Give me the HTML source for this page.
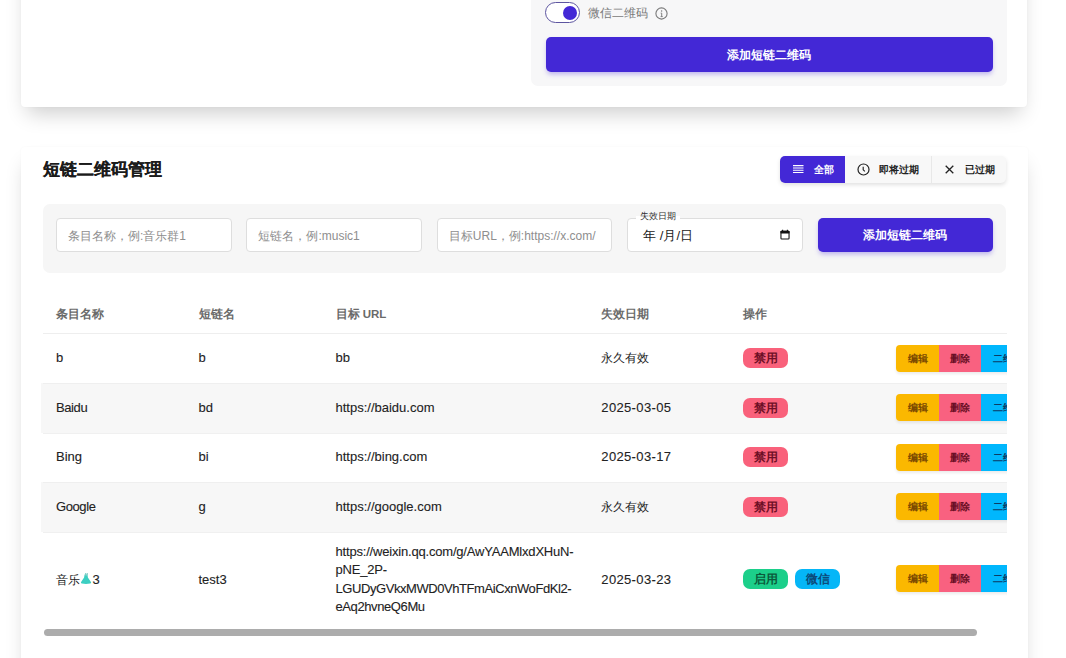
<!DOCTYPE html>
<html><head><meta charset="utf-8">
<style>
*{box-sizing:border-box;margin:0;padding:0}
html,body{width:1066px;height:658px;overflow:hidden;background:#fff;font-family:"Liberation Sans",sans-serif;color:#1f1f1f;position:relative}
.abs{position:absolute}
.card{position:absolute;background:#fff;border-radius:4px;box-shadow:0 12px 20px -6px rgba(0,0,0,.2),0 0 2px rgba(0,0,0,.04)}
.panel{position:absolute;background:#f7f7f8;border-radius:7px}
.btnp{position:absolute;background:#4328d6;border-radius:5px;color:#fff;font-weight:bold;font-size:11.7px;text-align:center;box-shadow:0 3px 5px -1px rgba(67,40,214,.35)}
.inp{position:absolute;top:14px;height:34px;width:175.5px;background:#fff;border:1px solid #dedede;border-radius:4px;font-size:12px;color:#8e8e8e;padding-left:11px;line-height:34px;white-space:nowrap;overflow:hidden}
.th{position:absolute;font-size:11.5px;font-weight:bold;color:#6a6a6a;top:2px;line-height:44px}
.row{position:absolute;left:0;width:1000px}
.row.z{background:#f7f7f7;box-shadow:-2px 0 0 #f7f7f7}
.cell{position:absolute;font-size:13px;color:#222;white-space:nowrap;line-height:18.5px;-webkit-text-stroke:0.1px #222}
.dis{background:#f9617b;color:#6e0f26}
.en{background:#1ccf8a;color:#0b5a3a}
.wx{background:#05b6f7;color:#0c4a7a}
.badge{position:absolute;height:20px;border-radius:7px;font-size:11.8px;font-weight:bold;text-align:center;line-height:20px;width:45px}
.acts{position:absolute;left:853px;height:27px;width:130px;border-radius:4px;overflow:hidden;box-shadow:0 2px 3px rgba(0,0,0,.08)}
.acts span{position:absolute;top:0;height:27px;line-height:27px;font-size:10.4px;font-weight:bold;text-align:center}
.seg{position:absolute;top:0;height:27px;line-height:28.5px;font-size:10px;font-weight:bold}
</style></head><body>

<!-- card 1 -->
<div class="card" style="left:21px;top:-120px;width:1006px;height:226.5px">
  <div class="panel" style="left:510px;top:0;width:476px;height:206px"></div>
</div>
<!-- toggle -->
<div class="abs" style="left:545px;top:2.2px;width:35px;height:21.2px;border:1.5px solid #5d55a0;border-radius:11px;background:#fff"></div>
<div class="abs" style="left:562.5px;top:6px;width:14px;height:14px;border-radius:50%;background:#4328d6"></div>
<div class="abs" style="left:588px;top:5px;font-size:11.8px;color:#7a7a7a;line-height:16px">微信二维码</div>
<svg class="abs" style="left:654.5px;top:6.5px" width="13" height="13" viewBox="0 0 13 13"><circle cx="6.5" cy="6.5" r="5.6" fill="none" stroke="#7a7a7a" stroke-width="1.1"/><circle cx="6.6" cy="4.1" r="0.75" fill="#7a7a7a"/><path d="M5.7 6.1h1v3.5M5.6 9.6h2.1" fill="none" stroke="#7a7a7a" stroke-width="0.95"/></svg>
<div class="btnp" style="left:545.5px;top:37.3px;width:447.5px;height:34.7px;line-height:36.5px">添加短链二维码</div>

<!-- card 2 -->
<div class="card" style="left:21px;top:147px;width:1007px;height:700px">
  <div class="abs" style="left:21.5px;top:12px;font-size:16.6px;font-weight:bold;color:#1b1b1b;line-height:22px;-webkit-text-stroke:0.12px #1b1b1b">短链二维码管理</div>
  <!-- segmented -->
  <div class="abs" style="left:759px;top:8.5px;width:226px;height:27px;border-radius:5px;background:#f8f8f8;box-shadow:0 2px 4px rgba(0,0,0,.12);overflow:hidden">
    <div class="seg" style="left:0;width:65px;background:#4328d6;color:#fff">
      <svg class="abs" style="left:12.5px;top:9.2px" width="11" height="9" viewBox="0 0 11 9"><path d="M0 0.6h10.5M0 2.9h10.5M0 5.2h10.5M0 7.5h10.5" stroke="#fff" stroke-width="1.05"/></svg>
      <span class="abs" style="left:34px;top:0">全部</span>
    </div>
    <div class="seg" style="left:65px;width:87px;color:#222;border-right:1px solid #e8e8e8">
      <svg class="abs" style="left:11.5px;top:7.5px" width="13" height="13" viewBox="0 0 13 13"><circle cx="6.5" cy="6.5" r="5.5" fill="none" stroke="#222" stroke-width="1.2"/><path d="M6.2 3.7v3.1l1.7 1.6" fill="none" stroke="#222" stroke-width="1.15"/></svg>
      <span class="abs" style="left:34px;top:0">即将过期</span>
    </div>
    <div class="seg" style="left:152px;width:74px;color:#222">
      <svg class="abs" style="left:13px;top:9.5px" width="9" height="9" viewBox="0 0 9 9"><path d="M0.7 0.7l7.6 7.6M8.3 0.7l-7.6 7.6" stroke="#222" stroke-width="1.3"/></svg>
      <span class="abs" style="left:33px;top:0">已过期</span>
    </div>
  </div>
  <!-- filter panel -->
  <div class="panel" style="left:22px;top:57px;width:963px;height:69px;background:#f6f6f6">
    <div class="inp" style="left:13px">条目名称，例:音乐群1</div>
    <div class="inp" style="left:203.4px">短链名，例:music1</div>
    <div class="inp" style="left:393.8px">目标URL，例:https://x.com/</div>
    <div class="inp" style="left:584.2px;color:#222;font-size:13px;padding-left:15px">年 /月/日
      <svg class="abs" style="left:152.3px;top:10.3px" width="10" height="11" viewBox="0 0 10 11"><rect x="0.95" y="2.2" width="8.1" height="7.8" rx="0.8" fill="none" stroke="#111" stroke-width="1.1"/><rect x="0.5" y="1.8" width="9" height="2.6" rx="0.6" fill="#111"/><path d="M2.6 0.8v1.5M7.4 0.8v1.5" stroke="#111" stroke-width="1.1"/></svg>
    </div>
    <div class="abs" style="left:593px;top:7.3px;font-size:9px;color:#333;background:#fff;padding:0 4px;line-height:11px;background:linear-gradient(#f6f6f6 50%,#fff 50%)">失效日期</div>
    <div class="btnp" style="left:774.6px;top:14px;width:175.5px;height:34px;line-height:34px">添加短链二维码</div>
  </div>
</div>

<!-- table -->
<div class="abs" style="left:41px;top:290px;width:966px;height:350px;overflow:hidden"><div class="abs" style="left:2px;top:0;width:1000px;height:350px">
  <div class="th" style="left:13px">条目名称</div>
  <div class="th" style="left:155.5px">短链名</div>
  <div class="th" style="left:292.5px">目标 URL</div>
  <div class="th" style="left:558.3px">失效日期</div>
  <div class="th" style="left:700.3px">操作</div>
  <div class="row" style="top:42.5px;height:1px;background:#eeeeee"></div>
  <div class="row" style="top:43.5px;height:49.5px">
    <div class="cell" style="left:13px;top:15.5px">b</div>
    <div class="cell" style="left:155.5px;top:15.5px">b</div>
    <div class="cell" style="left:292.5px;top:15.5px">bb</div>
    <div class="cell" style="left:558.3px;top:15.5px;font-size:12px;-webkit-text-stroke:0">永久有效</div>
    <div class="badge dis" style="left:700.3px;top:14.75px">禁用</div>
    <div class="acts" style="top:11.25px"><span style="left:0;width:43px;background:#fbb800;color:#7b4a00">编辑</span><span style="left:43px;width:41.7px;background:#f96180;color:#6b0f26">删除</span><span style="left:84.7px;width:55px;background:#00b7fd;color:#0c3a66;text-align:left;padding-left:12px">二维码</span></div>
  </div>
  <div class="row z" style="box-shadow:-2px 0 0 #f7f7f7,inset 0 1px 0 #efefef;top:93px;height:49.5px">
    <div class="cell" style="left:13px;top:15.5px;letter-spacing:-0.4px">Baidu</div>
    <div class="cell" style="left:155.5px;top:15.5px">bd</div>
    <div class="cell" style="left:292.5px;top:15.5px">https://baidu.com</div>
    <div class="cell" style="left:558.3px;top:15.5px;letter-spacing:0.35px">2025-03-05</div>
    <div class="badge dis" style="left:700.3px;top:14.75px">禁用</div>
    <div class="acts" style="top:11.25px"><span style="left:0;width:43px;background:#fbb800;color:#7b4a00">编辑</span><span style="left:43px;width:41.7px;background:#f96180;color:#6b0f26">删除</span><span style="left:84.7px;width:55px;background:#00b7fd;color:#0c3a66;text-align:left;padding-left:12px">二维码</span></div>
  </div>
  <div class="row" style="box-shadow:inset 0 1px 0 #f0f0f0;top:142.5px;height:49.5px">
    <div class="cell" style="left:13px;top:15.5px">Bing</div>
    <div class="cell" style="left:155.5px;top:15.5px">bi</div>
    <div class="cell" style="left:292.5px;top:15.5px">https://bing.com</div>
    <div class="cell" style="left:558.3px;top:15.5px;letter-spacing:0.35px">2025-03-17</div>
    <div class="badge dis" style="left:700.3px;top:14.75px">禁用</div>
    <div class="acts" style="top:11.25px"><span style="left:0;width:43px;background:#fbb800;color:#7b4a00">编辑</span><span style="left:43px;width:41.7px;background:#f96180;color:#6b0f26">删除</span><span style="left:84.7px;width:55px;background:#00b7fd;color:#0c3a66;text-align:left;padding-left:12px">二维码</span></div>
  </div>
  <div class="row z" style="box-shadow:-2px 0 0 #f7f7f7,inset 0 1px 0 #efefef;top:192px;height:49.5px">
    <div class="cell" style="left:13px;top:15.5px;letter-spacing:-0.4px">Google</div>
    <div class="cell" style="left:155.5px;top:15.5px">g</div>
    <div class="cell" style="left:292.5px;top:15.5px">https://google.com</div>
    <div class="cell" style="left:558.3px;top:15.5px;font-size:12px;-webkit-text-stroke:0">永久有效</div>
    <div class="badge dis" style="left:700.3px;top:14.75px">禁用</div>
    <div class="acts" style="top:11.25px"><span style="left:0;width:43px;background:#fbb800;color:#7b4a00">编辑</span><span style="left:43px;width:41.7px;background:#f96180;color:#6b0f26">删除</span><span style="left:84.7px;width:55px;background:#00b7fd;color:#0c3a66;text-align:left;padding-left:12px">二维码</span></div>
  </div>
  <div class="row" style="box-shadow:inset 0 1px 0 #f0f0f0;top:241.5px;height:96.5px">
    <div class="cell" style="left:13px;top:39px;height:18.5px"><span style="font-size:12px;-webkit-text-stroke:0">音乐</span><svg style="vertical-align:0px;margin:0 0.5px 0 1px" width="11" height="11" viewBox="0 0 11 11"><path d="M4.2 0.2h0.8l0.5 1.2 0.5-1.2h0.8l-0.2 2.2 0.3 2 3 4.6q0.6 1.3-0.8 1.6-2.1 0.4-4.1 0.4t-4.1-0.4q-1.4-0.3-0.8-1.6l3-4.6 0.3-2z" fill="#3ccfc2"/><path d="M4.2 0.2h0.8l0.5 1.2 0.5-1.2h0.8l-0.2 2.2h-2.2z" fill="#9fcfca"/></svg>3</div>
    <div class="cell" style="left:155.5px;top:39.0px">test3</div>
    <div class="cell" style="left:292.5px;top:11.25px;white-space:normal;width:260px;line-height:18.5px;letter-spacing:-0.19px">https://weixin.qq.com/g/AwYAAMlxdXHuN-<br>pNE_2P-<br><span style="letter-spacing:-0.43px">LGUDyGVkxMWD0VhTFmAiCxnWoFdKl2-</span><br><span style="letter-spacing:-0.4px">eAq2hvneQ6Mu</span></div>
    <div class="cell" style="left:558.3px;top:39.0px;letter-spacing:0.35px">2025-03-23</div>
    <div class="badge en" style="left:700.3px;top:37.6px">启用</div>
    <div class="badge wx" style="left:752.3px;top:37.6px">微信</div>
    <div class="acts" style="top:33.9px"><span style="left:0;width:43px;background:#fbb800;color:#7b4a00">编辑</span><span style="left:43px;width:41.7px;background:#f96180;color:#6b0f26">删除</span><span style="left:84.7px;width:55px;background:#00b7fd;color:#0c3a66;text-align:left;padding-left:12px">二维码</span></div>
  </div>
</div></div>

<!-- scrollbar -->
<div class="abs" style="left:44px;top:629px;width:933px;height:7px;border-radius:4px;background:#acacac"></div>

</body></html>
